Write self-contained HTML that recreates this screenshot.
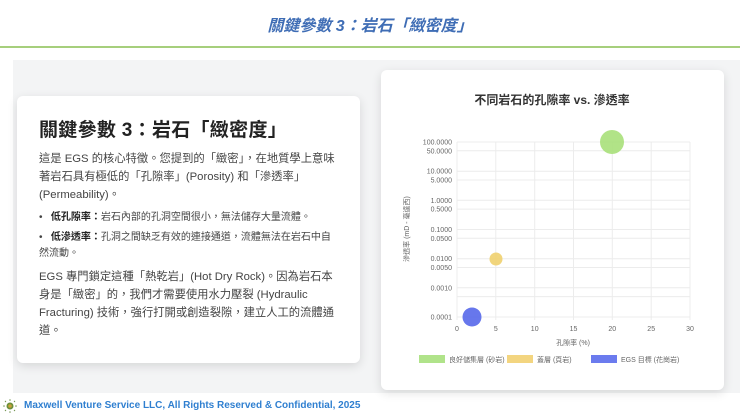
<!DOCTYPE html>
<html><head><meta charset="utf-8"><style>
*{margin:0;padding:0;box-sizing:border-box}
body{width:740px;height:416px;background:#fff;font-family:"Liberation Sans","Noto Sans CJK TC",sans-serif;position:relative;overflow:hidden;color:#333}
.hdr{position:absolute;top:12px;left:0;width:740px;text-align:center;font-size:16px;font-weight:bold;font-style:italic;color:#3f6db5}
.line{position:absolute;top:46px;left:0;width:740px;height:2px;background:#a6cf7c}
.bg{position:absolute;left:13px;top:60px;width:727px;height:333px;background:#f3f4f5}
.card{position:absolute;background:#fff;border-radius:6px;box-shadow:0 3px 10px rgba(0,0,0,.12)}
.l{left:17px;top:96px;width:343px;height:267px;padding:19px 22px 0 22px}
.l h1{font-size:19px;color:#222;font-weight:bold;margin-bottom:8px;letter-spacing:.3px}
.l p{font-size:11.3px;line-height:18px;color:#444}
.l ul{list-style:none;margin:6px 0 6px}
.l li{font-size:10px;line-height:16px;color:#444;margin-bottom:4px}
.l li b{color:#222}
.r{left:381px;top:70px;width:343px;height:320px}
.foot{position:absolute;left:24px;top:400px;font-size:10px;font-weight:bold;color:#2f7fd0}
</style></head><body>
<div class="hdr">關鍵參數 3：岩石「緻密度」</div>
<div class="line"></div>
<div class="bg"></div>
<div class="card l">
<h1>關鍵參數 3：岩石「緻密度」</h1>
<p>這是 EGS 的核心特徵。您提到的「緻密」，在地質學上意味著岩石具有極低的「孔隙率」(Porosity) 和「滲透率」(Permeability)。</p>
<ul>
<li>•&nbsp;&nbsp; <b>低孔隙率：</b>岩石內部的孔洞空間很小，無法儲存大量流體。</li>
<li>•&nbsp;&nbsp; <b>低滲透率：</b>孔洞之間缺乏有效的連接通道，流體無法在岩石中自然流動。</li>
</ul>
<p>EGS 專門鎖定這種「熱乾岩」(Hot Dry Rock)。因為岩石本身是「緻密」的，我們才需要使用水力壓裂 (Hydraulic Fracturing) 技術，強行打開或創造裂隙，建立人工的流體通道。</p>
</div>
<div class="card r"></div>
<svg style="position:absolute;left:0;top:0" width="740" height="416" font-family="Liberation Sans,Noto Sans CJK TC,sans-serif">
<text x="552" y="104" text-anchor="middle" font-size="12" font-weight="bold" fill="#333">不同岩石的孔隙率 vs. 滲透率</text>
<g stroke="#ececec" stroke-width="1">
<line x1="457" x2="690" y1="142" y2="142"/><line x1="457" x2="690" y1="150.8" y2="150.8"/>
<line x1="457" x2="690" y1="171.2" y2="171.2"/><line x1="457" x2="690" y1="180" y2="180"/>
<line x1="457" x2="690" y1="200.3" y2="200.3"/><line x1="457" x2="690" y1="209.1" y2="209.1"/>
<line x1="457" x2="690" y1="229.5" y2="229.5"/><line x1="457" x2="690" y1="238.3" y2="238.3"/>
<line x1="457" x2="690" y1="258.7" y2="258.7"/><line x1="457" x2="690" y1="267.5" y2="267.5"/>
<line x1="457" x2="690" y1="287.8" y2="287.8"/><line x1="457" x2="690" y1="296.6" y2="296.6"/>
<line x1="457" x2="690" y1="317" y2="317"/>
<line x1="457" x2="457" y1="142" y2="320"/><line x1="495.8" x2="495.8" y1="142" y2="320"/>
<line x1="534.7" x2="534.7" y1="142" y2="320"/><line x1="573.5" x2="573.5" y1="142" y2="320"/>
<line x1="612.3" x2="612.3" y1="142" y2="320"/><line x1="651.2" x2="651.2" y1="142" y2="320"/>
<line x1="690" x2="690" y1="142" y2="320"/>
</g>
<g font-size="7" fill="#666" text-anchor="end">
<text x="452" y="144.5">100.0000</text><text x="452" y="153.3">50.0000</text>
<text x="452" y="173.7">10.0000</text><text x="452" y="182.5">5.0000</text>
<text x="452" y="202.8">1.0000</text><text x="452" y="211.6">0.5000</text>
<text x="452" y="232">0.1000</text><text x="452" y="240.8">0.0500</text>
<text x="452" y="261.2">0.0100</text><text x="452" y="270">0.0050</text>
<text x="452" y="290.3">0.0010</text><text x="452" y="319.5">0.0001</text>
</g>
<g font-size="7" fill="#666" text-anchor="middle">
<text x="457" y="331">0</text><text x="495.8" y="331">5</text><text x="534.7" y="331">10</text>
<text x="573.5" y="331">15</text><text x="612.3" y="331">20</text><text x="651.2" y="331">25</text><text x="690" y="331">30</text>
<text x="573" y="345">孔隙率 (%)</text>
<text transform="translate(409,229) rotate(-90)">滲透率 (mD - 毫達西)</text>
</g>
<circle cx="612" cy="142" r="12" fill="#a8e07a" opacity=".9"/>
<circle cx="496" cy="259" r="6.5" fill="#f0d06e" opacity=".9"/>
<circle cx="472" cy="317" r="9.5" fill="#5668ea" opacity=".9"/>
<g font-size="7" fill="#666">
<rect x="419" y="355" width="26" height="8" fill="#b0e38a"/><text x="449" y="362">良好儲集層 (砂岩)</text>
<rect x="507" y="355" width="26" height="8" fill="#f3d580"/><text x="537" y="362">蓋層 (頁岩)</text>
<rect x="591" y="355" width="26" height="8" fill="#6b7bee"/><text x="621" y="362">EGS 目標 (花崗岩)</text>
</g>
<g transform="translate(10,406)">
<circle r="3.5" fill="#6a8f3a"/><circle r="1.8" fill="#c9a23a"/>
<g fill="#7a9a5a"><circle cx="-6" cy="0" r=".8"/><circle cx="6" cy="0" r=".8"/><circle cx="0" cy="-6" r=".8"/><circle cx="0" cy="6" r=".8"/><circle cx="-4.5" cy="-4.5" r=".7"/><circle cx="4.5" cy="4.5" r=".7"/><circle cx="4.5" cy="-4.5" r=".7"/><circle cx="-4.5" cy="4.5" r=".7"/></g>
</g>
</svg>
<div class="foot">Maxwell Venture Service LLC, All Rights Reserved &amp; Confidential, 2025</div>
</body></html>
